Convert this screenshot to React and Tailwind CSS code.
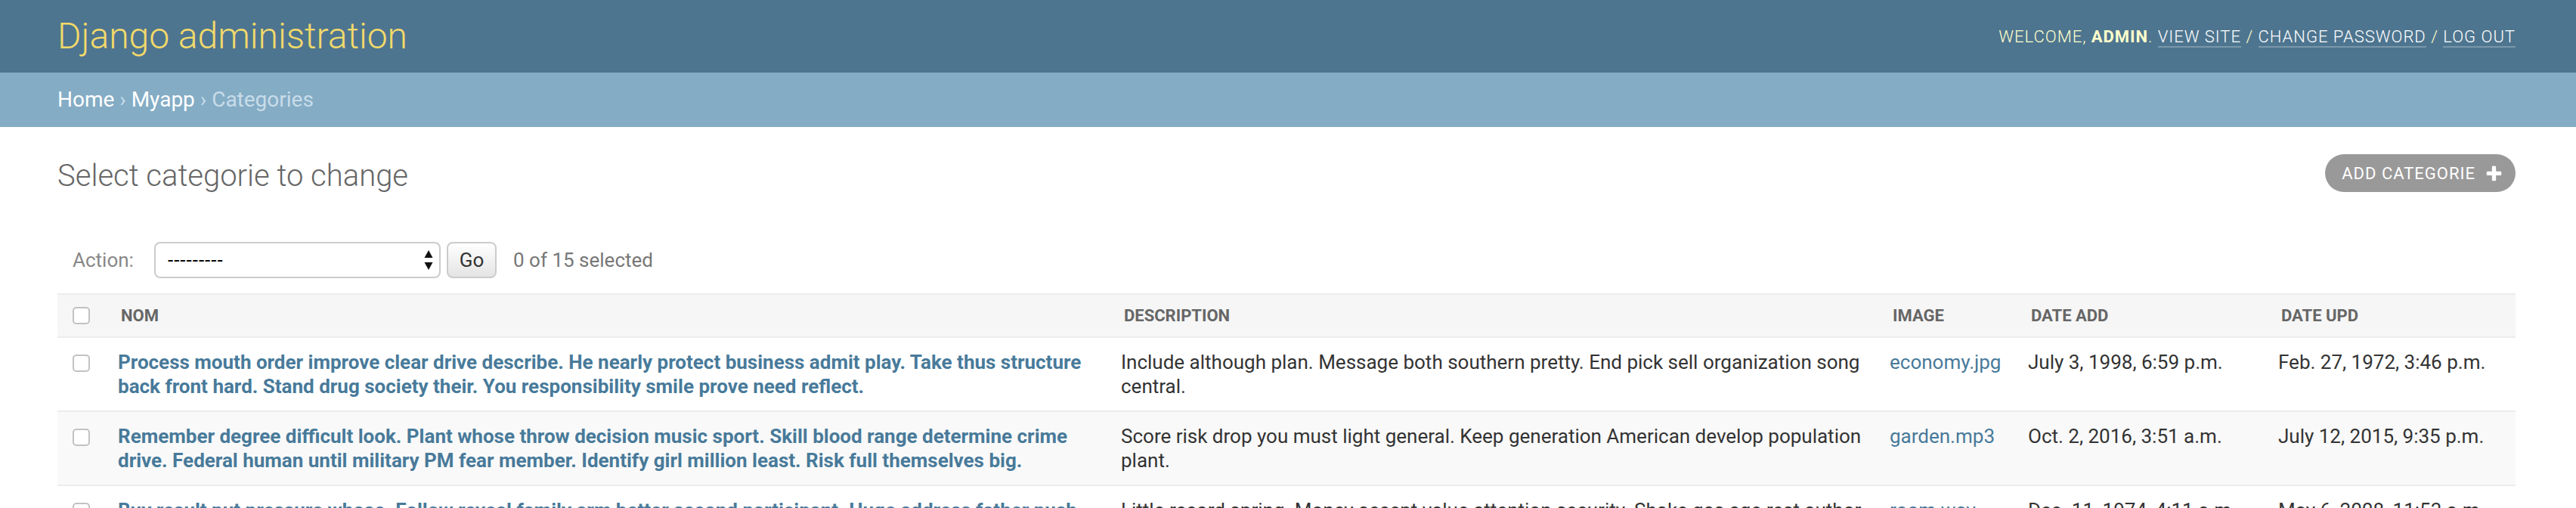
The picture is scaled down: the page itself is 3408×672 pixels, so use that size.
import { useState } from "react";

const rows = [
  {
    nom: "Process mouth order improve clear drive describe. He nearly protect business admit play. Take thus structure back front hard. Stand drug society their. You responsibility smile prove need reflect.",
    desc: "Include although plan. Message both southern pretty. End pick sell organization song central.",
    image: "economy.jpg",
    added: "July 3, 1998, 6:59 p.m.",
    updated: "Feb. 27, 1972, 3:46 p.m.",
  },
  {
    nom: "Remember degree difficult look. Plant whose throw decision music sport. Skill blood range determine crime drive. Federal human until military PM fear member. Identify girl million least. Risk full themselves big.",
    desc: "Score risk drop you must light general. Keep generation American develop population plant.",
    image: "garden.mp3",
    added: "Oct. 2, 2016, 3:51 a.m.",
    updated: "July 12, 2015, 9:35 p.m.",
  },
  {
    nom: "Buy result put pressure whose. Follow reveal family arm better second participant. Huge address father push cold. Memory site event however these rule.",
    desc: "Little record spring. Money accept value attention security. Shake gas age rest author their.",
    image: "room.wav",
    added: "Dec. 11, 1974, 4:11 a.m.",
    updated: "May 6, 2008, 11:53 a.m.",
  },
];

function Checkbox({ checked, onChange }) {
  return (
    <input
      type="checkbox"
      checked={checked}
      onChange={onChange}
      className="appearance-none block w-[23px] h-[23px] ml-[4px] rounded-[5px] border-2 border-[#c2c2c2] bg-white checked:bg-[#447e9b] checked:border-[#447e9b]"
    />
  );
}

function AddIcon() {
  return (
    <svg viewBox="0 0 1792 1792" className="w-[25px] h-[25px]">
      <path
        fill="#ffffff"
        d="M1600 796v192q0 40-28 68t-68 28h-416v416q0 40-28 68t-68 28h-192q-40 0-68-28t-28-68v-416h-416q-40 0-68-28t-28-68v-192q0-40 28-68t68-28h416v-416q0-40 28-68t68-28h192q40 0 68 28t28 68v416h416q40 0 68 28t28 68z"
      />
    </svg>
  );
}

function SelectArrows() {
  return (
    <svg viewBox="0 0 12 26" className="w-[12px] h-[26px]">
      <path d="M6 0 L11.5 10 L0.5 10 Z" fill="#111" />
      <path d="M6 26 L11.5 16 L0.5 16 Z" fill="#111" />
    </svg>
  );
}

export default function App() {
  const [selected, setSelected] = useState([]);
  const toggle = (i) =>
    setSelected((s) => (s.includes(i) ? s.filter((x) => x !== i) : [...s, i]));
  const allChecked = selected.length === rows.length;

  return (
    <div className="min-h-screen bg-white font-['Roboto',sans-serif] text-[#333]">
      {/* Header */}
      <header className="h-[96px] bg-[#4e758f] flex items-center justify-between pl-[76px] pr-[80px]">
        <h1 className="text-[48px] font-light text-[#f2da6a] leading-none">
          Django administration
        </h1>
        <div className="text-[22px] font-light uppercase tracking-[1px] text-[#ffffcc]">
          Welcome, <strong className="font-bold">admin</strong>.{" "}
          <a className="text-white border-b-2 border-white/25">View site</a> /{" "}
          <a className="text-white border-b-2 border-white/25">Change password</a> /{" "}
          <a className="text-white border-b-2 border-white/25">Log out</a>
        </div>
      </header>

      {/* Breadcrumbs */}
      <div className="h-[72px] bg-[#84acc5] flex items-center pl-[76px] text-[28px] text-[#c8dce9] whitespace-pre">
        <a className="text-white">Home</a>
        <span> › </span>
        <a className="text-white">Myapp</a>
        <span> › </span>
        <span>Categories</span>
      </div>

      {/* Content */}
      <div className="pl-[76px] pr-[80px]">
        <div className="flex items-start justify-between mt-[36px]">
          <h1 className="mt-[4px] text-[40px] leading-[50px] font-light text-[#666]">
            Select categorie to change
          </h1>
          <a className="h-[50px] flex items-center gap-[12px] pl-[22px] pr-[16px] rounded-full bg-[#999] text-white text-[22px] uppercase tracking-[1px]">
            Add categorie
            <AddIcon />
          </a>
        </div>

        {/* Actions */}
        <div className="mt-[62px] h-[48px] flex items-center pl-[20px] text-[26px]">
          <label className="w-[108px] shrink-0 text-[#888]">Action:</label>
          <div className="relative w-[379px] h-[48px] shrink-0">
            <select className="appearance-none w-full h-full rounded-[8px] border-2 border-[#ccc] bg-white pl-[16px] text-[26px] tracking-[1px] text-black">
              <option>---------</option>
              <option>Delete selected categories</option>
            </select>
            <span className="absolute right-[10px] top-[11px] pointer-events-none">
              <SelectArrows />
            </span>
          </div>
          <button className="ml-[8px] w-[66px] h-[48px] rounded-[8px] border-2 border-[#ccc] bg-gradient-to-b from-white to-[#e4e4e4] text-[26px] text-[#333]">
            Go
          </button>
          <span className="ml-[22px] text-[#777]">
            {selected.length} of 15 selected
          </span>
        </div>

        {/* Result list */}
        <table className="mt-[20px] w-full table-fixed border-collapse">
          <colgroup>
            <col className="w-[64px]" />
            <col className="w-[1327px]" />
            <col className="w-[1017px]" />
            <col className="w-[183px]" />
            <col className="w-[331px]" />
            <col className="w-[330px]" />
          </colgroup>
          <thead>
            <tr className="bg-[#f6f6f6] border-y-2 border-[#ececec] text-[22px] font-bold uppercase text-[#666]">
              <th className="h-[57px] px-[16px] align-middle">
                <Checkbox
                  checked={allChecked}
                  onChange={() =>
                    setSelected(allChecked ? [] : rows.map((_, i) => i))
                  }
                />
              </th>
              <th className="px-[20px] text-left align-middle font-bold">Nom</th>
              <th className="px-[20px] text-left align-middle font-bold">Description</th>
              <th className="px-[20px] text-left align-middle font-bold">Image</th>
              <th className="px-[20px] text-left align-middle font-bold">Date add</th>
              <th className="px-[20px] text-left align-middle font-bold">Date upd</th>
            </tr>
          </thead>
          <tbody className="text-[26px] leading-[32px]">
            {rows.map((r, i) => (
              <tr
                key={i}
                className={`border-b-2 border-[#ececec] ${i % 2 === 1 ? "bg-[#f9f9f9]" : "bg-white"}`}
              >
                <td className="px-[16px] py-[16px] align-top">
                  <div className="pt-[6px]">
                    <Checkbox
                      checked={selected.includes(i)}
                      onChange={() => toggle(i)}
                    />
                  </div>
                </td>
                <td className="px-[16px] py-[16px] align-top">
                  <a className="font-bold text-[#487a9a]">{r.nom}</a>
                </td>
                <td className="px-[16px] py-[16px] align-top text-[#333]">{r.desc}</td>
                <td className="px-[16px] py-[16px] align-top">
                  <a className="text-[#487a9a]">{r.image}</a>
                </td>
                <td className="px-[16px] py-[16px] align-top text-[#333]">{r.added}</td>
                <td className="px-[16px] py-[16px] align-top text-[#333]">{r.updated}</td>
              </tr>
            ))}
          </tbody>
        </table>
      </div>
    </div>
  );
}
